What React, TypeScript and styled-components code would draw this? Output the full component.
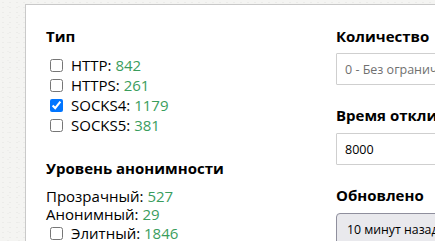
import React from 'react';
import styled, { createGlobalStyle } from 'styled-components';

const GlobalStyle = createGlobalStyle`
  html, body {
    margin: 0;
    padding: 0;
    overflow: hidden;
    background: #f4f4f2;
    background-image:
      radial-gradient(rgba(0, 0, 0, 0.035) 1px, transparent 1px),
      radial-gradient(rgba(0, 0, 0, 0.025) 1px, transparent 1px);
    background-size: 7px 5px, 11px 9px;
    background-position: 0 0, 3px 2px;
    font-family: "Open Sans", "Noto Sans", sans-serif;
    color: #000;
  }
`;

const Page = styled.div`
  padding: 4px 0 0 25px;
  width: 700px;
`;

const Card = styled.div`
  width: 640px;
  background: #fff;
  border: 1px solid #c9c9c9;
  border-right: none;
  padding: 22px 20px 20px;
  display: grid;
  grid-template-columns: 270px 1fr;
  column-gap: 20px;
`;

const Column = styled.div`
  display: flex;
  flex-direction: column;
`;

const Heading = styled.div<{ $gap?: number }>`
  font-size: 15px;
  font-weight: 700;
  line-height: 18px;
  margin-bottom: ${p => p.$gap ?? 10}px;
  white-space: nowrap;
`;

const Group = styled.div<{ $after?: number }>`
  display: flex;
  flex-direction: column;
  margin-bottom: ${p => p.$after ?? 0}px;
`;

const CheckRow = styled.label`
  display: flex;
  align-items: center;
  height: 20px;
  font-size: 15px;
  white-space: nowrap;

  input {
    width: 13px;
    height: 13px;
    margin: 0 8px 0 4px;
  }
`;

const TextRow = styled.div`
  height: 18px;
  line-height: 18px;
  font-size: 15px;
  white-space: nowrap;
`;

const Count = styled.span`
  color: #3a9d5d;
`;

const Field = styled.input`
  box-sizing: border-box;
  width: 260px;
  height: 32px;
  border: 1px solid #cfcfcf;
  border-radius: 1px;
  padding: 0 8px;
  font-family: "Open Sans", "Noto Sans", sans-serif;
  font-size: 12.5px;
  color: #000;
  margin-bottom: 21px;
  outline: none;

  &::placeholder {
    color: #707070;
  }
`;

const SelectBox = styled.div`
  box-sizing: border-box;
  width: 260px;
  height: 32px;
  border: 1px solid #8f8f9d;
  border-radius: 4px;
  background: #e9e9ed;
  padding: 0 10px;
  display: flex;
  align-items: center;
  font-size: 12.3px;
  color: #000;
  white-space: nowrap;
`;

const types = [
  { name: 'HTTP', count: 842, checked: false },
  { name: 'HTTPS', count: 261, checked: false },
  { name: 'SOCKS4', count: 1179, checked: true },
  { name: 'SOCKS5', count: 381, checked: false },
];

export default function App() {
  return (
    <>
      <GlobalStyle />
      <Page>
        <Card>
          <Column>
            <Heading>Тип</Heading>
            <Group $after={24}>
              {types.map(t => (
                <CheckRow key={t.name}>
                  <input type="checkbox" defaultChecked={t.checked} />
                  {t.name}:&nbsp;<Count>{t.count}</Count>
                </CheckRow>
              ))}
            </Group>

            <Heading>Уровень анонимности</Heading>
            <Group>
              <TextRow>
                Прозрачный: <Count>527</Count>
              </TextRow>
              <TextRow>
                Анонимный: <Count>29</Count>
              </TextRow>
              <CheckRow>
                <input type="checkbox" />
                Элитный:&nbsp;<Count>1846</Count>
              </CheckRow>
            </Group>
          </Column>

          <Column>
            <Heading $gap={8}>Количество</Heading>
            <Field type="text" placeholder="0 - Без ограничений" />

            <Heading $gap={9}>Время отклика</Heading>
            <Field type="text" defaultValue="8000" />

            <Heading $gap={9}>Обновлено</Heading>
            <SelectBox>10 минут назад</SelectBox>
          </Column>
        </Card>
      </Page>
    </>
  );
}
